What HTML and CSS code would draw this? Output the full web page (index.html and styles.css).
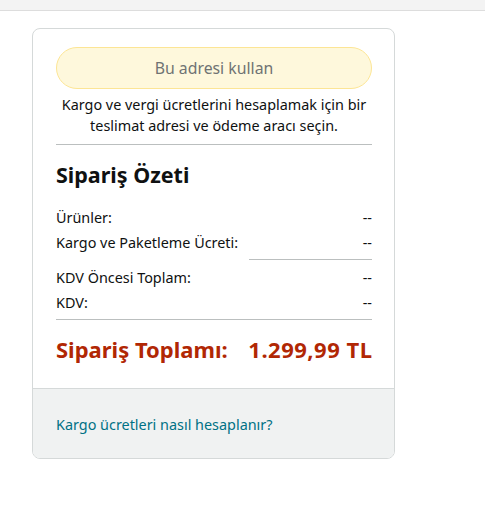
FILE: index.html
```html
<!DOCTYPE html>
<html lang="tr">
<head>
<meta charset="utf-8">
<link rel="stylesheet" href="styles.css">
</head>
<body>
<div class="topbar"></div>
<main class="page">
  <section class="card">
    <div class="card-body">
      <button class="use-btn" type="button">Bu adresi kullan</button>
      <p class="hint">Kargo ve vergi ücretlerini hesaplamak için bir teslimat adresi ve ödeme aracı seçin.</p>
      <hr class="rule">
      <h2 class="title">Sipariş Özeti</h2>
      <div class="rows">
        <div class="row"><span>Ürünler:</span><span>--</span></div>
        <div class="row"><span>Kargo ve Paketleme Ücreti:</span><span>--</span></div>
        <div class="subrule"></div>
        <div class="row"><span>KDV Öncesi Toplam:</span><span>--</span></div>
        <div class="row"><span>KDV:</span><span>--</span></div>
      </div>
      <hr class="rule rule-total">
      <div class="total"><span>Sipariş Toplamı:</span><span class="amount">1.299,99 TL</span></div>
    </div>
    <div class="card-foot">
      <a class="link" href="#">Kargo ücretleri nasıl hesaplanır?</a>
    </div>
  </section>
</main>
</body>
</html>
```

FILE: styles.css
```css
* { box-sizing: border-box; }
html, body { margin: 0; padding: 0; background: #fff; }
body {
  font-family: "Noto Sans", "Liberation Sans", sans-serif;
  color: #0f1111;
  font-size: 14.4px;
}
.topbar {
  height: 11px;
  background: #f3f3f3;
  border-bottom: 1px solid #dddddd;
}
.page {
  padding: 17px 0 0 32px;
}
.card {
  width: 363px;
  border: 1px solid #d5d9d9;
  border-radius: 8px;
  overflow: hidden;
}
.card-body {
  padding: 18px 22px 24px 23px;
}
.use-btn {
  display: block;
  width: 100%;
  height: 42px;
  border: 1px solid #fce595;
  background: #fef8dc;
  border-radius: 21px;
  color: #6f7373;
  font-family: inherit;
  font-size: 15.8px;
  padding: 0;
}
.hint {
  margin: 5px 0 0;
  text-align: center;
  line-height: 21px;
  font-size: 14.4px;
}
.rule {
  border: 0;
  border-top: 1px solid #bbbfbf;
  margin: 8px 0 0;
}
.title {
  margin: 16px 0 0;
  font-size: 21.5px;
  font-weight: 700;
  line-height: 28px;
}
.rows {
  margin-top: 16px;
}
.row {
  display: flex;
  justify-content: space-between;
  line-height: 25px;
  font-size: 14.4px;
}
.subrule {
  margin: 4px 0 5px auto;
  width: 123px;
  border-top: 1px solid #bbbfbf;
}
.rule-total { margin-top: 4px; }
.total {
  display: flex;
  justify-content: space-between;
  margin-top: 14px;
  color: #b12704;
  font-weight: 700;
  font-size: 22px;
  line-height: 30px;
}
.amount {
  letter-spacing: 0.5px;
  margin-right: -0.5px;
}
.card-foot {
  background: #f0f2f2;
  border-top: 1px solid #d5d9d9;
  padding: 26px 23px 23px;
  line-height: 20px;
}
.link {
  color: #007185;
  text-decoration: none;
  font-size: 14.4px;
}
```
